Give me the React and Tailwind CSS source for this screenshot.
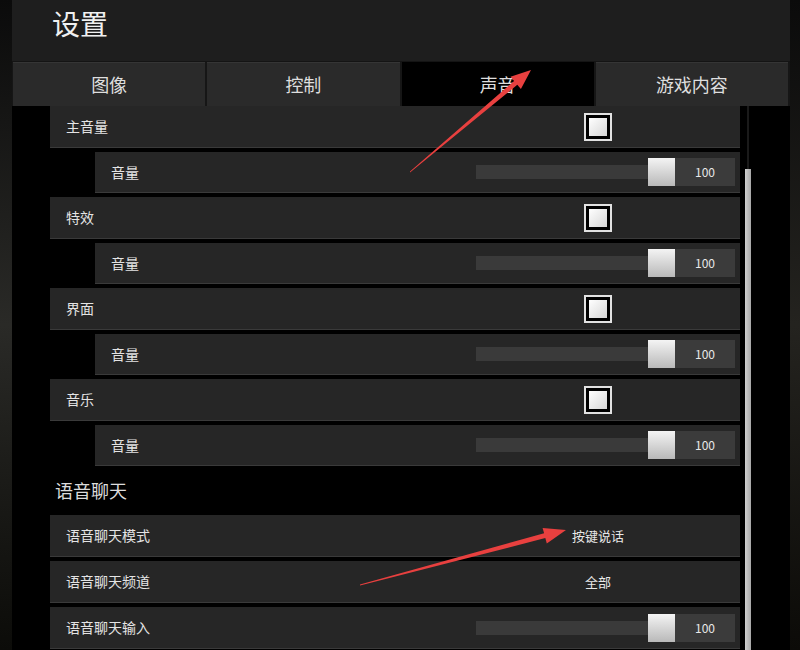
import React from 'react'

const font = { fontFamily: '"Noto Sans CJK SC", "Noto Sans", sans-serif' }

const tabs = ['图像', '控制', '声音', '游戏内容']

// checkbox drawn as nested squares
const Check = () => (
  <div className="w-[28px] h-[28px] border-2 border-[#e2e2e2] p-[3px] bg-black">
    <div className="w-full h-full bg-gradient-to-br from-white to-[#d6d6d6]" />
  </div>
)

const Slider = () => (
  <div className="flex items-center mr-[5px]">
    <div className="relative w-[199px] h-[28px] flex items-center">
      <div className="w-[184px] h-[14px] bg-[#3a3a3a]" />
      <div className="absolute right-0 top-0 w-[27px] h-[28px] bg-gradient-to-b from-[#f4f4f4] to-[#b9b9b9]" />
    </div>
    <div className="w-[60px] h-[28px] bg-[#3b3b3b] flex items-center justify-center text-[12px] text-[#e8e8e8]">100</div>
  </div>
)

const MainRow = ({ label, children }) => (
  <div className="flex items-center h-[42px] bg-[#262626] border-b border-[#3a3a3a]">
    <span className="flex-1 pl-[16px] text-[14px] text-[#e4e4e4]">{label}</span>
    <div className="w-[260px] mr-[12px] flex justify-center text-[13px] text-[#e8e8e8]">{children}</div>
  </div>
)

const SubRow = () => (
  <div className="flex items-center h-[41px] ml-[45px] bg-[#262626] border-b border-[#3a3a3a]">
    <span className="flex-1 pl-[16px] text-[14px] text-[#e4e4e4]">音量</span>
    <Slider />
  </div>
)

const SliderRow = ({ label }) => (
  <div className="flex items-center h-[42px] bg-[#262626] border-b border-[#3a3a3a]">
    <span className="flex-1 pl-[16px] text-[14px] text-[#e4e4e4]">{label}</span>
    <Slider />
  </div>
)

export default function App() {
  return (
    <div className="relative w-[800px] h-[650px] overflow-hidden flex bg-black" style={font}>
      {/* left outside edge */}
      <div className="w-[12px] bg-gradient-to-b from-[#0b0b0b] via-[#2a2a27] to-[#0c0c09]" />

      {/* settings window */}
      <div className="w-[778px] flex flex-col">
        <div className="h-[62px] bg-[#1e1e1e] border-b border-[#141414] flex items-start pt-[9px] pl-[40px]">
          <span className="text-[28px] text-[#f0f0f0] leading-none">设置</span>
        </div>

        <div className="h-[44px] flex gap-[2px] pl-[1px] pr-[2px] bg-[#161616]">
          {tabs.map((t, i) => (
            <div
              key={t}
              className={`flex-1 flex items-center justify-center text-[18px] text-[#dedede] ${i === 2 ? 'bg-black' : 'bg-[#2a2a2a] border-t border-[#353535]'}`}
            >
              {t}
            </div>
          ))}
        </div>

        <div className="flex-1 flex bg-black overflow-hidden">
          <div className="w-[728px] pl-[38px] flex flex-col">
            <div className="flex flex-col gap-[4px]">
              <MainRow label="主音量"><Check /></MainRow>
              <SubRow />
              <MainRow label="特效"><Check /></MainRow>
              <SubRow />
              <MainRow label="界面"><Check /></MainRow>
              <SubRow />
              <MainRow label="音乐"><Check /></MainRow>
              <SubRow />
            </div>

            <div className="h-[49px] flex items-center pl-[5px] text-[18px] text-[#dcdcdc]">语音聊天</div>

            <div className="flex flex-col gap-[4px]">
              <MainRow label="语音聊天模式">按键说话</MainRow>
              <MainRow label="语音聊天频道">全部</MainRow>
              <SliderRow label="语音聊天输入" />
            </div>
          </div>

          {/* scrollbar */}
          <div className="w-[6px] ml-[5px] flex flex-col">
            <div className="h-[63px] w-[2px] mx-auto bg-[#1a1a1a]" />
            <div className="flex-1 bg-gradient-to-r from-[#d0d0d0] to-[#a8a8a8]" />
          </div>
        </div>
      </div>

      {/* right outside edge */}
      <div className="w-[10px] bg-gradient-to-b from-[#0b0b0b] via-[#24231f] to-[#0c0b08]" />

      {/* red annotation arrows */}
      <svg className="absolute inset-0 pointer-events-none" width="800" height="650" viewBox="0 0 800 650">
        <polygon fill="#e8403f" points="410,172.5 517.3,84.8 520.9,89 531,70 510.5,76.8 514.1,81 410,171.5" />
        <polygon fill="#e8403f" points="360,585.5 545.3,538.1 546.8,543.4 566,530 542.6,528 544.1,533.3 360,584.5" />
      </svg>
    </div>
  )
}
